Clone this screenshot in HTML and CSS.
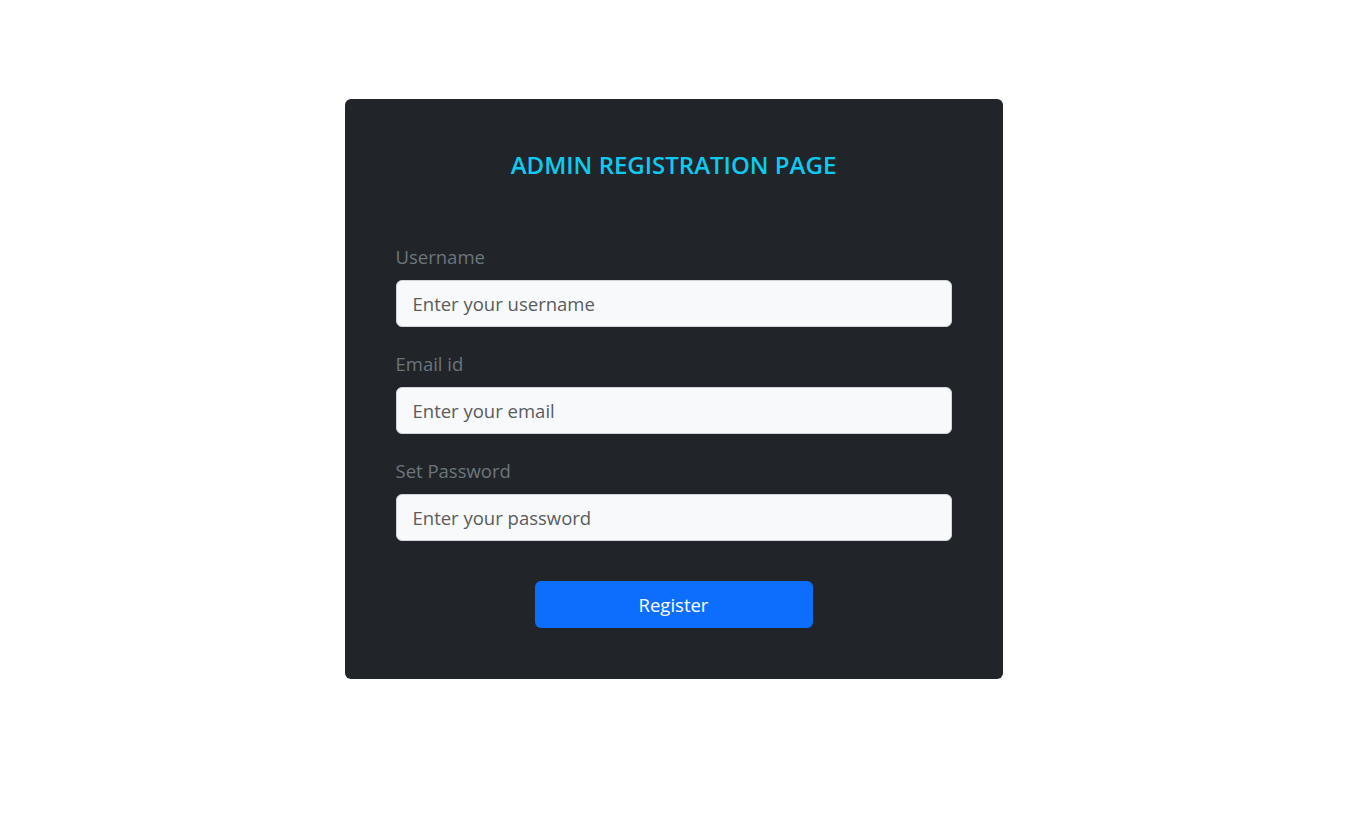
FILE: index.html
```html
<!DOCTYPE html>
<html lang="en">
<head>
<meta charset="utf-8">
<title>Admin Registration</title>
<link rel="stylesheet" href="styles.css">
</head>
<body>
<main class="page">
  <form class="card">
    <h4 class="title">ADMIN REGISTRATION PAGE</h4>
    <div class="field">
      <label class="label" for="u">Username</label>
      <input class="input" id="u" type="text" placeholder="Enter your username">
    </div>
    <div class="field">
      <label class="label" for="e">Email id</label>
      <input class="input" id="e" type="email" placeholder="Enter your email">
    </div>
    <div class="field">
      <label class="label" for="p">Set Password</label>
      <input class="input" id="p" type="password" placeholder="Enter your password">
    </div>
    <div class="actions">
      <button class="btn" type="button">Register</button>
    </div>
  </form>
</main>
</body>
</html>
```

FILE: styles.css
```css
* { box-sizing: border-box; }
html, body { margin: 0; padding: 0; background: #fff; }
body {
  font-family: "Open Sans", "Noto Sans", sans-serif;
  color: #212529;
}
.page {
  display: flex;
  justify-content: center;
  padding-top: 99px;
}
.card {
  width: 658px;
  background: #212529;
  border-radius: 6px;
  padding: 48px 51px 51px;
  display: flex;
  flex-direction: column;
}
.title {
  margin: 0 0 59px;
  text-align: center;
  color: #0dcaf0;
  font-size: 24px;
  font-weight: 600;
  line-height: 36px;
}
.field {
  display: flex;
  flex-direction: column;
  margin-bottom: 22px;
}
.label {
  color: #6c757d;
  font-size: 18.5px;
  line-height: 30px;
  margin-bottom: 8px;
}
.input {
  height: 47px;
  border: 1px solid #ced4da;
  border-radius: 6px;
  background: #f8f9fa;
  padding: 0 16px;
  font-family: inherit;
  font-size: 18.5px;
  color: #212529;
  outline: none;
}
.input::placeholder { color: #595c5f; opacity: 1; }
.actions {
  display: flex;
  justify-content: center;
  margin-top: 18px;
}
.btn {
  width: 278px;
  height: 47px;
  border: none;
  border-radius: 6px;
  background: #0d6efd;
  color: #fff;
  font-family: inherit;
  font-size: 18.5px;
}
```
